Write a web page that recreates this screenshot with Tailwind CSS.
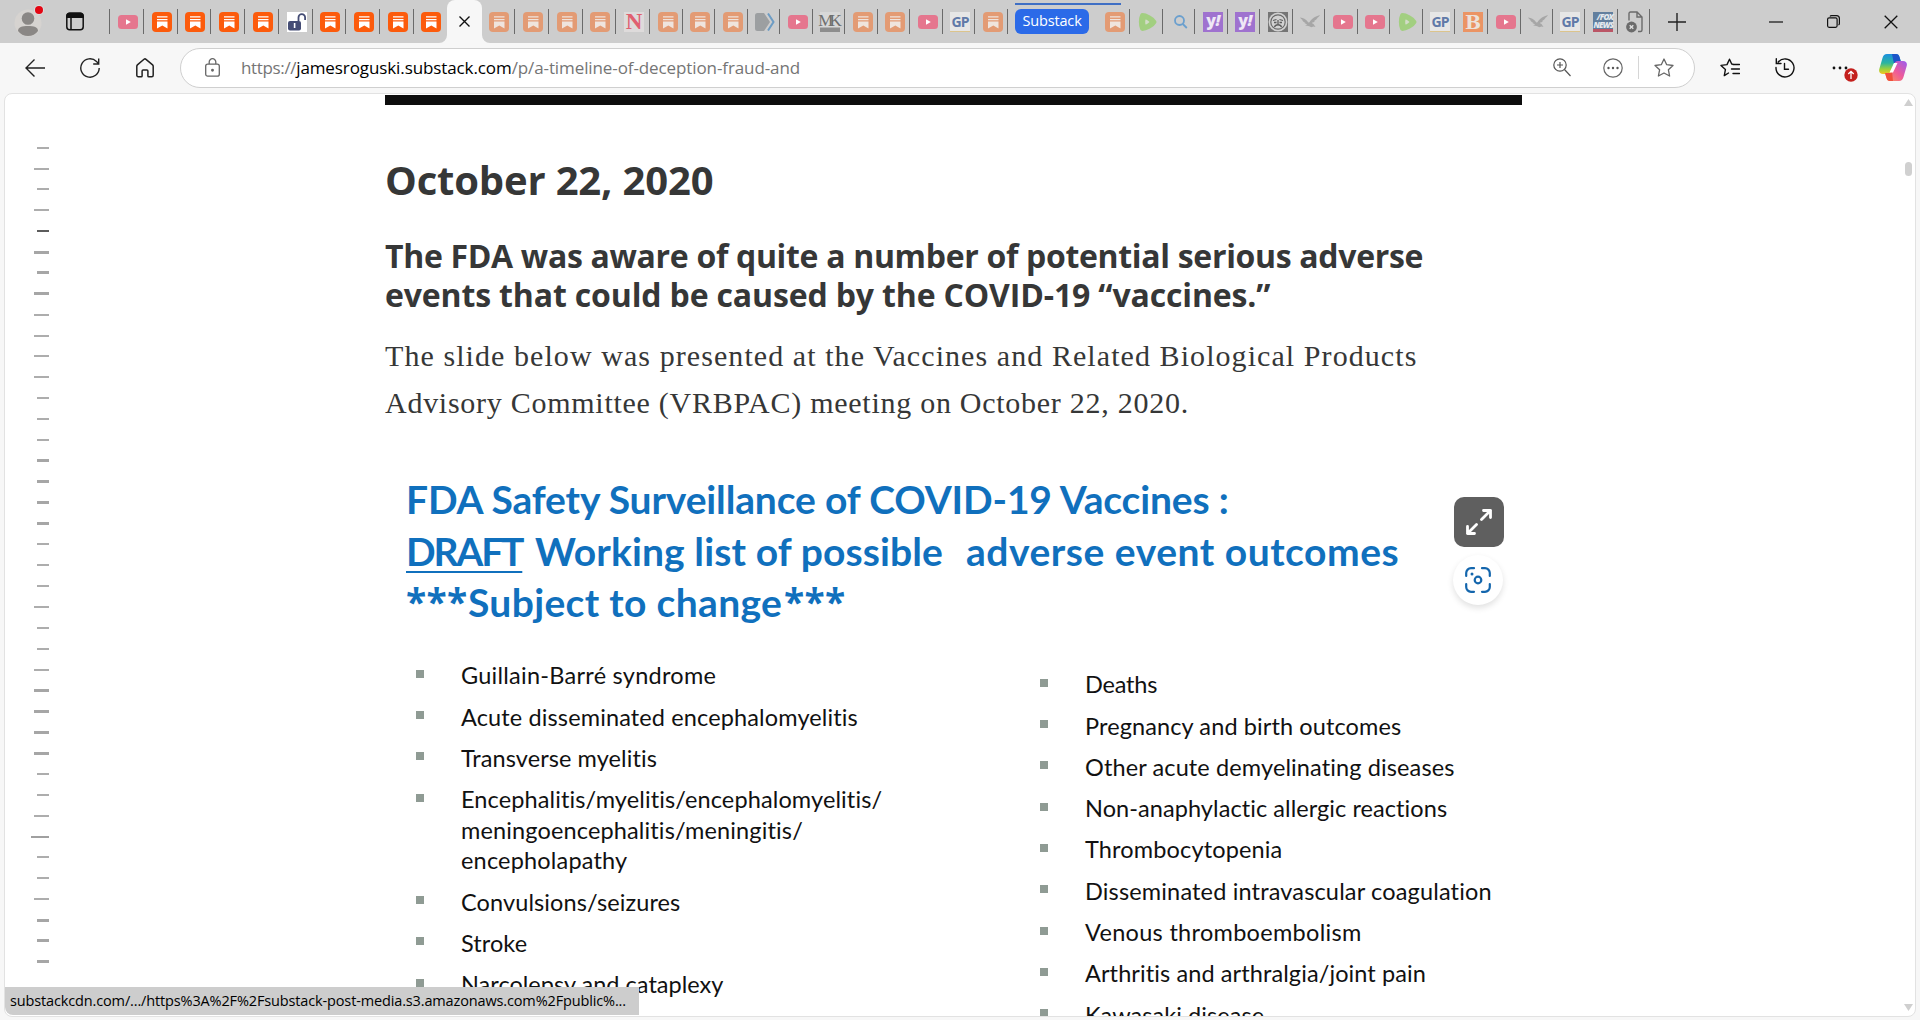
<!DOCTYPE html>
<html lang="en">
<head>
  <meta charset="UTF-8">
  <meta name="viewport" content="width=device-width, initial-scale=1.0">
  <title>A timeline of deception, fraud and</title>
  <script src="https://cdn.jsdelivr.net/npm/@tailwindcss/browser@4"></script>
</head>
<body class="h-screen flex flex-col overflow-hidden bg-[#f7f7f7] font-['Open_Sans',sans-serif]">

  <!-- Tab strip -->
  <header class="h-[43px] shrink-0 bg-[#cdcdcd] flex items-center">
    <div class="relative ml-3.5 w-7 h-7 mt-0.5">
      <svg width="28" height="28" viewBox="0 0 28 28">
        <circle cx="14" cy="14" r="13.5" fill="#d6d3d0"/>
        <circle cx="14" cy="9.5" r="6.3" fill="#8a8785"/>
        <path d="M4 22c0-4 4-5 10-5s10 1 10 5c-2 3-6 5-10 5s-8-2-10-5z" fill="#8a8785"/>
      </svg>
      <span class="absolute -top-[3px] -right-px w-2 h-2 rounded-full bg-[#e30613] ring-1 ring-[#dcdcdc]"></span>
    </div>
    <svg class="ml-6" width="18" height="19" viewBox="0 0 18 19" fill="none" stroke="#111" stroke-width="1.5">
      <rect x=".8" y="1.2" width="16.4" height="16.6" rx="3"/>
      <path d="M1 3.8a3 3 0 0 1 2.800-2.600h10.400a3 3 0 0 1 2.800 2.600v1.400H1z" fill="#111"/>
      <path d="M5 5v12.500"/>
    </svg>
    <div class="ml-[25px] h-[25px] w-px bg-[#6a6a6a]"></div>
    <div id="tabsLeft" class="flex items-center"></div>

    <!-- Active tab -->
    <div class="relative self-stretch w-[35px] bg-[#f7f7f7] rounded-t-lg flex items-center justify-center">
      <svg class="absolute bottom-0 -left-2" width="8" height="8" viewBox="0 0 8 8"><path d="M8 0v8H0a8 8 0 0 0 8-8z" fill="#f7f7f7"/></svg>
      <svg class="absolute bottom-0 -right-2" width="8" height="8" viewBox="0 0 8 8"><path d="M0 0v8h8a8 8 0 0 1-8-8z" fill="#f7f7f7"/></svg>
      <svg width="11" height="11" viewBox="0 0 11 11" stroke="#111" stroke-width="1.4"><path d="M.5.5l10 10M10.500.5l-10 10"/></svg>
    </div>
    <div id="tabsNear" class="flex items-center"></div>
    <div id="tabsMiddle" class="flex items-center"></div>

    <!-- Tab group -->
    <div class="relative ml-[7px] w-[74px] h-[25px] rounded-md bg-[#2b6ae8] text-white text-[14.5px] leading-[24px] text-center tracking-[-0.15px]">
      Substack
      <span class="absolute left-0 -top-[6px] w-[106px] h-0.5 bg-[#3f6fc4]"></span>
    </div>
    <div id="tabsRight" class="flex items-center"></div>

    <svg class="ml-[18px]" width="18" height="18" viewBox="0 0 18 18" stroke="#222" stroke-width="1.4"><path d="M9 0v18M0 9h18"/></svg>
    <svg class="ml-[83px]" width="14" height="4" viewBox="0 0 14 4" stroke="#111" stroke-width="1.2"><path d="M0 2h14"/></svg>
    <svg class="ml-[44px]" width="13" height="13" viewBox="0 0 13 13" fill="none" stroke="#111" stroke-width="1.2"><rect x=".6" y="2.800" width="9.500" height="9.500" rx="1.500"/><path d="M3 1.500C3.300.9 3.800.6 4.500.6h5a2.900 2.900 0 0 1 2.900 2.900v5c0 .7-.3 1.200-.9 1.500"/></svg>
    <svg class="ml-[44px]" width="14" height="14" viewBox="0 0 14 14" stroke="#111" stroke-width="1.3"><path d="M.7.7l12.600 12.600M13.300.7L.7 13.300"/></svg>
  </header>

  <!-- Toolbar -->
  <nav class="h-[49px] shrink-0 flex items-center pl-[25px]">
    <svg width="20" height="18" viewBox="0 0 20 18" fill="none" stroke="#222" stroke-width="1.400"><path d="M20 9H1M9.500.5L1 9l8.500 8.500"/></svg>
    <svg class="ml-[35px]" width="20" height="20" viewBox="0 0 20 20" fill="none" stroke="#222" stroke-width="1.400"><path d="M19.200 10a9.200 9.200 0 1 1-2.700-6.500l2 2M18.700.5V6h-5.500"/></svg>
    <svg class="ml-[36px]" width="18" height="20" viewBox="0 0 18 20" fill="none" stroke="#222" stroke-width="1.500" stroke-linejoin="round"><path d="M.8 8.300c0-.6.200-1 .6-1.400L8 1.300c.6-.5 1.400-.5 2 0l6.600 5.600c.4.4.6.800.6 1.400v9c0 .8-.6 1.500-1.400 1.500h-3c-.5 0-.9-.4-.9-.9V13c0-.6-.4-1-1-1H7.100c-.6 0-1 .4-1 1v4.900c0 .5-.4.9-.9.9h-3c-.8 0-1.400-.7-1.400-1.500z"/></svg>

    <div class="ml-[26px] w-[1515px] h-10 rounded-full border border-[#cfcfcf] bg-white flex items-center pl-6 pr-5">
      <svg width="15" height="19" viewBox="0 0 15 19" fill="none" stroke="#666" stroke-width="1.300"><rect x=".7" y="6.200" width="13.600" height="12" rx="2"/><path d="M4.200 6V4a3.300 3.300 0 0 1 6.600 0v2"/><circle cx="7.500" cy="12.200" r=".8" fill="#666"/></svg>
      <p class="ml-[21px] text-[17px] leading-none whitespace-nowrap text-[#757575] tracking-[-0.1px]"><span class="tracking-[-0.35px]">https://</span><span class="text-black">jamesroguski.substack.com</span>/p/a-timeline-of-deception-fraud-and</p>
      <svg class="ml-auto" width="18" height="19" viewBox="0 0 18 19" fill="none" stroke="#555" stroke-width="1.200"><circle cx="7" cy="7" r="6.200"/><path d="M11.500 11.500l6 6.500M7 4v6M4 7h6"/></svg>
      <svg class="ml-8" width="20" height="20" viewBox="0 0 20 20" fill="none" stroke="#666" stroke-width="1.200"><circle cx="10" cy="10" r="9.200"/><g fill="#555" stroke="none"><circle cx="5.500" cy="10" r="1.200"/><circle cx="10" cy="10" r="1.200"/><circle cx="14.500" cy="10" r="1.200"/></g></svg>
      <div class="ml-[15px] w-px h-[23px] bg-[#d6d6d6]"></div>
      <svg class="ml-[15px]" width="20" height="20" viewBox="0 0 20 20" fill="none" stroke="#666" stroke-width="1.300" stroke-linejoin="round"><path d="M10 1l2.700 5.700 6.300.8-4.600 4.300 1.200 6.200L10 15l-5.600 3 1.200-6.200L1 7.500l6.300-.8z"/></svg>
    </div>

    <svg class="ml-[25px]" width="20" height="20" viewBox="0 0 20 20" fill="none" stroke="#111" stroke-width="1.400" stroke-linejoin="round" stroke-linecap="round"><path d="M13 6.200l-1.300-.2L9.500 1.200 7 6.600l-6 .8 4.400 4.200-1.100 6L8.500 15M13 6.500h6.500M11.500 11h8M13 15.500h6.500"/></svg>
    <svg class="ml-[35px]" width="20" height="20" viewBox="0 0 20 20" fill="none" stroke="#111" stroke-width="1.400" stroke-linecap="round"><path d="M1 9.500A9 9 0 1 0 3.200 4M1.300.8v4.700H6M9.500 5.500v5.700h4"/></svg>
    <div class="relative ml-[37px] w-[26px] h-5 flex items-center">
      <svg width="16" height="4" viewBox="0 0 16 4" fill="#111"><circle cx="2" cy="2" r="1.400"/><circle cx="8" cy="2" r="1.400"/><circle cx="14" cy="2" r="1.400"/></svg>
      <svg class="absolute left-[12px] top-[10px]" width="14" height="14" viewBox="0 0 14 14"><circle cx="7" cy="7" r="6.700" fill="#c4201d"/><path d="M7 11V3.500M4.300 6L7 3.300 9.700 6" fill="none" stroke="#fff" stroke-width="1.300"/></svg>
    </div>
    <svg class="ml-[21px]" width="28" height="27" viewBox="0 0 28 27">
      <defs>
        <linearGradient id="cpA" x1="0" y1="0" x2="0" y2="1"><stop offset="0" stop-color="#1b8fe0"/><stop offset=".45" stop-color="#2bb5a0"/><stop offset=".75" stop-color="#9bd13c"/><stop offset="1" stop-color="#f4c420"/></linearGradient>
        <linearGradient id="cpB" x1="1" y1="0" x2="0" y2="1"><stop offset="0" stop-color="#9a5cf0"/><stop offset=".5" stop-color="#ee5a9a"/><stop offset="1" stop-color="#ff9a50"/></linearGradient>
      </defs>
      <path d="M8 0h9c2 0 3 1 3.500 3L22 8h-4c-2 0-3 1-3.500 3l-2 6.500C12 19 11 20 9 20H4c-3 0-4.500-2-3.700-5L3.500 4C4.300 1.500 5.500 0 8 0z" fill="url(#cpA)"/>
      <path d="M13 0h4c2 0 3 1 3.500 3L22 8h-4c-1.500 0-2.500.5-3 2z" fill="#1c55c8"/>
      <path d="M20 27h-9c-2 0-3-1-3.500-3L6 19h4c2 0 3-1 3.500-3l2-6.500C16 8 17 7 19 7h5c3 0 4.500 2 3.700 5l-3.200 11c-.8 2.500-2 4-4.500 4z" fill="url(#cpB)"/>
      <path d="M14 27h-3c-2 0-3-1-3.500-3L6 19h4c1.500 0 2.500-.5 3-2z" fill="#f0503c"/>
      <path d="M15 9h3.500l-4.500 9.500h-3.500z" fill="#fff"/>
    </svg>
  </nav>

  <!-- Page -->
  <main class="relative flex-1 min-h-0 mt-px mx-1 mb-[3px] border border-[#e2e2e2] rounded-lg bg-white overflow-hidden flex">
    <div id="outline" class="w-11 shrink-0 pt-[43.3px] flex flex-col items-end"></div>

    <article class="relative ml-[336px] w-[1137px] shrink-0 text-[#363737]">
      <hr class="mt-px h-2.5 border-0 bg-[#0d0d0d]">
      <h1 class="mt-[51px] text-[40px] leading-[48px] font-bold tracking-[-0.17px]">October 22, 2020</h1>
      <h2 class="mt-8 text-[32px] leading-[39px] font-bold whitespace-nowrap">
        <span class="block tracking-[-0.32px]">The FDA was aware of quite a number of potential serious adverse</span>
        <span class="block tracking-[-0.15px]">events that could be caused by the COVID-19 “vaccines.”</span>
      </h2>
      <p class="mt-[18px] text-[30px] leading-[47px] whitespace-nowrap font-['Liberation_Serif',serif]">
        <span class="block tracking-[1.07px]">The slide below was presented at the Vaccines and Related Biological Products</span>
        <span class="block tracking-[0.73px]">Advisory Committee (VRBPAC) meeting on October 22, 2020.</span>
      </p>

      <!-- Slide -->
      <section class="mt-[47px] font-['Lato',sans-serif]">
        <div class="pl-[21px] text-[39px] font-bold text-[#1070bd] whitespace-nowrap">
          <div class="leading-[52px] tracking-[-0.15px]">FDA Safety Surveillance of COVID-19 Vaccines :</div>
          <div class="leading-[52px] flex">
            <span class="w-[117px] mr-3 tracking-[-2.2px] underline decoration-2 underline-offset-[5px]">DRAFT</span>
            <span class="w-[431px] tracking-[0.12px]">Working list of possible</span>
            <span class="tracking-[0.52px]">adverse event outcomes</span>
          </div>
          <div class="leading-[50px] flex">
            <span class="w-[62px] text-[37px] tracking-[0.3px] font-['Open_Sans',sans-serif]">***</span>
            <span class="w-[316px] tracking-[0.33px]">Subject to change</span>
            <span class="text-[37px] tracking-[0.3px] font-['Open_Sans',sans-serif]">***</span>
          </div>
        </div>
        <div class="mt-[28px] pl-[31px] flex text-[23.5px] leading-[30.6px] text-[#111] whitespace-nowrap">
          <ul id="listLeft" class="w-[624px] shrink-0"></ul>
          <ul id="listRight" class="mt-[9px]"></ul>
        </div>
      </section>

      <!-- Image buttons -->
      <button class="absolute left-[1069px] top-[403px] w-[50px] h-[50px] rounded-[10px] bg-[#5f5f5f] flex items-center justify-center">
        <svg width="26" height="26" viewBox="0 0 26 26" fill="none" stroke="#fff" stroke-width="2.800" stroke-linecap="round" stroke-linejoin="round"><path d="M15.500 10.500L24.500 1.500M17.500 1.500h7v7M10.500 15.500L1.500 24.500M1.500 17.500v7h7"/></svg>
      </button>
      <button class="absolute left-[1068px] top-[461px] w-[50px] h-[50px] rounded-full bg-white shadow-[0_3px_6px_rgba(0,0,0,0.12)] flex items-center justify-center">
        <svg width="26" height="26" viewBox="0 0 26 26" fill="none" stroke="#1466ad" stroke-width="2.200" stroke-linecap="round"><path d="M1.200 9V6a4.800 4.800 0 0 1 4.800-4.800h3M17 1.200h3A4.800 4.800 0 0 1 24.800 6v3M24.800 17v3a4.800 4.800 0 0 1-4.800 4.800h-3M9 24.800H6A4.800 4.800 0 0 1 1.200 20v-3"/><circle cx="13" cy="13" r="3.300"/><circle cx="7" cy="7" r="1.500" fill="#1466ad" stroke="none"/></svg>
      </button>
    </article>

    <!-- Scrollbar -->
    <div class="ml-auto w-[14px] py-[5px] flex flex-col items-center">
      <svg width="9" height="7" viewBox="0 0 9 7" fill="#cfcfcf"><path d="M4.500 0L9 7H0z"/></svg>
      <div class="mt-[56px] w-[7px] h-[14px] rounded-full bg-[#d0d0d0]"></div>
      <svg class="mt-auto" width="9" height="7" viewBox="0 0 9 7" fill="#cfcfcf"><path d="M0 0h9L4.500 7z"/></svg>
    </div>

    <!-- Link status -->
    <div class="absolute left-0 bottom-px w-[634px] h-7 bg-[#cdcdcd] rounded-bl-lg pl-[5px] text-[14.5px] leading-[28px] text-black tracking-[-0.14px] whitespace-nowrap">substackcdn.com/.../https%3A%2F%2Fsubstack-post-media.s3.amazonaws.com%2Fpublic%...</div>
  </main>

  <script>
    const substack = (bg, fg) => `<svg width="20" height="20" viewBox="0 0 20 20"><rect width="20" height="20" rx="4" fill="${bg}"/><path d="M5 4.300h10.500v1.300H5zM5 6.900h10.500v1.300H5zM5 9.500h10.500v7l-5.200-3-5.300 3z" fill="${fg}"/></svg>`;

    // Favicons by key
    const icons = {
      s: substack('#fc5b0c', '#fff'),
      d: substack('#e39b74', '#efe4dd'),
      yt: `<svg width="20" height="14" viewBox="0 0 20 14"><rect width="20" height="14" rx="3.500" fill="#e5768e"/><path d="M8 4.200v5.600l4.800-2.800z" fill="#fff"/></svg>`,
      lock: `<svg width="20" height="20" viewBox="0 0 20 20"><rect width="20" height="20" fill="#fff"/><rect x="1" y="9" width="13" height="9.500" rx="2" fill="#454d75"/><path d="M11.500 9V5.500a3.300 3.300 0 0 1 6.600 0V8" fill="none" stroke="#454d75" stroke-width="1.800"/><rect x="6.800" y="11" width="1.600" height="5" fill="#fff"/></svg>`,
      n: `<div class="w-5 h-5 bg-[#dedbdb] text-[#e06070] text-[23px] leading-5 text-center font-bold font-['Liberation_Serif',serif]">N</div>`,
      arrow: `<svg width="20" height="18" viewBox="0 0 20 18"><path d="M0 2.500A2.500 2.500 0 0 1 2.500 0H9l6 9-6 9H2.500A2.500 2.500 0 0 1 0 15.500z" fill="#9c9fa1"/><path d="M13 .5L18.500 9 13 17.500" fill="none" stroke="#6d9cc4" stroke-width="2"/></svg>`,
      mk: `<div class="w-5 h-5 bg-linear-to-b from-[#d8d8d8] from-75% to-[#8d8d8d] to-80% text-[#6f6f6f] text-[17px] leading-[17px] flex justify-center tracking-[-4px] font-['Liberation_Serif',serif]"><span class="-ml-1">MK</span></div>`,
      gp: `<div class="w-5 h-5 bg-[#e6e6e6] border-b border-[#dcc48c] text-[#6079a8] text-[14px] leading-5 text-center font-bold tracking-[-1px]">GP</div>`,
      rumble: `<svg width="20" height="20" viewBox="0 0 20 20"><path d="M4.500 3.500c3 0 10 3.500 11.500 6.500-1.500 3-8.500 6.500-11.500 6.500-1.500-3-1.500-10 0-13z" fill="#a2cf80" stroke="#a2cf80" stroke-width="5" stroke-linejoin="round"/><path d="M7.500 7.500c1.500.3 3 1.300 4 2.500-1 1.200-2.500 2.200-4 2.500-.4-1.500-.4-3.500 0-5z" fill="#d3dcc8"/></svg>`,
      search: `<svg width="20" height="20" viewBox="0 0 20 20" fill="none" stroke="#6a9fce" stroke-width="1.800"><circle cx="9.500" cy="8.500" r="4.500"/><path d="M12.800 12l4 4"/></svg>`,
      y: `<div class="w-5 h-5 bg-[#9f72cf] text-[#efe8f6] text-[16px] leading-[17px] text-center font-extrabold tracking-[-0.5px]">y<i>!</i></div>`,
      face: `<svg width="20" height="20" viewBox="0 0 20 20"><rect width="20" height="20" fill="#757575"/><circle cx="10" cy="10" r="9.400" fill="#d2d2d2"/><circle cx="10" cy="10" r="7.200" fill="#d2d2d2" stroke="#6a6a6a" stroke-width="1.200"/><path d="M5 8.500l3.500-1M15 8.500l-3.500-1M10 8v4M6.500 15c1-3 6-3 7 0M6 10.500h2.500M11.500 10.500H14" stroke="#5d5d5d" stroke-width="1.300" fill="none"/></svg>`,
      bird: `<svg width="20" height="14" viewBox="0 0 20 14" fill="#a6a6a6"><path d="M0 2.500c3.500.3 6.500 2 8.300 5l1.200-.2C11 4.500 14 1.500 20 0c-.8 1.500-2 2.600-3.500 3.300.3 0 .6 0 1 0-.9 1.200-2 2-3.300 2.400l.8.200c-.8 1-1.900 1.600-3.200 1.900.3.600.9 1 1.700 1.200l2 3-2-.6-2.200.9c-1.300-.8-2.600-1.300-4.300-1.500L5 10.500l2-.7C6.500 9 5.500 8.500 4.500 8l1 0C3.500 7 2.500 6 2.200 5l1 .3C1.700 4.500.6 3.500 0 2.500z"/></svg>`,
      b: `<div class="w-5 h-5 bg-[#eb9464] text-[#ece2da] text-[19px] leading-5 text-center font-bold font-['DejaVu_Serif',serif]">B</div>`,
      fox: `<div class="w-5 h-5 bg-[#627f9e] border-b-3 border-[#bb5666] text-[#e4e9ee] text-[8px] leading-[8px] pt-px text-right font-extrabold italic tracking-[-0.8px]">/FOX<br>NEWS</div>`,
      file: `<svg width="20" height="22" viewBox="0 0 20 22" fill="none" stroke="#6b6b6b" stroke-width="1.400"><path d="M4 9.500V2.500C4 1.600 4.600 1 5.500 1H12l5 5v13c0 .9-.6 1.500-1.500 1.500H13M12 1v5h5"/><circle cx="6.500" cy="16" r="5.400" fill="#6b6b6b" stroke="none"/><path d="M4.700 14.200l3.600 3.600M8.300 14.200l-3.600 3.600" stroke="#e0e0e0"/></svg>`
    };

    // [icon, tab width]
    const tabsLeft = [['yt', 34], ['s', 34], ['s', 33], ['s', 34], ['s', 34], ['lock', 34], ['s', 33], ['s', 34], ['s', 34], ['s', 33, true]];
    const tabsNear = [['d', 33], ['d', 34], ['d', 34], ['d', 33], ['n', 34]];
    const tabsMiddle = [['d', 33], ['d', 32], ['d', 33], ['arrow', 32], ['yt', 33], ['mk', 32], ['d', 33], ['d', 32], ['yt', 33], ['gp', 32], ['d', 33]];
    const tabsRight = [['d', 41], ['rumble', 33], ['search', 32], ['y', 33], ['y', 32], ['face', 33], ['bird', 32], ['yt', 33], ['yt', 32], ['rumble', 33], ['gp', 32], ['b', 33], ['yt', 33], ['bird', 32], ['gp', 32], ['fox', 33], ['file', 32]];

    function renderTabs(id, tabs, gap) {
      document.getElementById(id).innerHTML = tabs.map(([icon, width, last]) => `
        <div class="h-[25px] flex items-center justify-end ${gap} shrink-0" style="width:${width}px">
          ${icons[icon]}
          <div class="w-px h-[25px] ${last ? 'bg-transparent' : 'bg-[#6a6a6a]'}"></div>
        </div>
      `).join('');
    }

    // Outline ticks: a/b/c = short/medium/long, capitals are thick, x is the current one
    const ticks = {
      a: 'w-3 h-0.5 bg-[#adadad]',
      b: 'w-[15px] h-0.5 bg-[#adadad]',
      c: 'w-[18px] h-0.5 bg-[#a0a0a0]',
      A: 'w-3 h-[3px] bg-[#a6a6a6]',
      B: 'w-[15px] h-[3px] bg-[#a6a6a6]',
      x: 'w-3 h-0.5 bg-[#5c5c5c]'
    };
    document.getElementById('outline').innerHTML = [...'ababxBABbbbbaaaAAAAaaabaabBBBBaabcaabAAA'].map(t => `
      <div class="h-[20.88px] shrink-0 flex items-center"><div class="${ticks[t]}"></div></div>
    `).join('');

    const listLeft = [
      [['Guillain-Barré syndrome', 'tracking-[0.26px]']],
      [['Acute disseminated encephalomyelitis', 'tracking-[0.13px]']],
      [['Transverse myelitis', 'tracking-[0.08px]']],
      [['Encephalitis/myelitis/encephalomyelitis/', 'tracking-[0.12px]'], ['meningoencephalitis/meningitis/', 'tracking-[0.14px]'], ['encepholapathy', 'tracking-[0.18px]']],
      [['Convulsions/seizures', 'tracking-[0.11px]']],
      [['Stroke', 'tracking-[0.08px]']],
      [['Narcolepsy and cataplexy', 'tracking-[0.02px]']]
    ];
    const listRight = [
      [['Deaths', 'tracking-[-0.2px]']],
      [['Pregnancy and birth outcomes', 'tracking-[0.11px]']],
      [['Other acute demyelinating diseases', 'tracking-[0.12px]']],
      [['Non-anaphylactic allergic reactions', 'tracking-[0.07px]']],
      [['Thrombocytopenia', 'tracking-[0.15px]']],
      [['Disseminated intravascular coagulation', 'tracking-[0.16px]']],
      [['Venous thromboembolism', 'tracking-[0.3px]']],
      [['Arthritis and arthralgia/joint pain', 'tracking-[0.1px]']],
      [['Kawasaki disease', 'tracking-[0.06px]']]
    ];

    function renderList(id, items) {
      document.getElementById(id).innerHTML = items.map(lines => `
        <li class="flex gap-[37px] py-[5.35px]">
          <span class="mt-[9.5px] w-2 h-2 shrink-0 bg-[#8f9b94]"></span>
          <div>${lines.map(([text, tracking]) => `<div class="${tracking}">${text}</div>`).join('')}</div>
        </li>
      `).join('');
    }

    renderTabs('tabsLeft', tabsLeft, 'gap-[5px]');
    renderTabs('tabsNear', tabsNear, 'gap-[5px]');
    renderTabs('tabsMiddle', tabsMiddle, 'gap-1');
    renderTabs('tabsRight', tabsRight, 'gap-1');
    renderList('listLeft', listLeft);
    renderList('listRight', listRight);
  </script>
</body>
</html>
